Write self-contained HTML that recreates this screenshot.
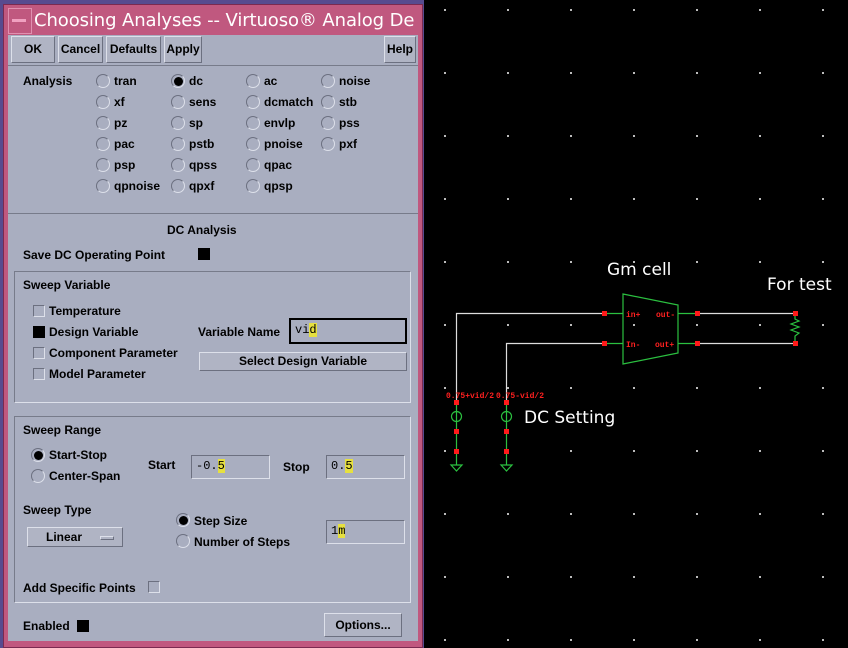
<!DOCTYPE html>
<html><head><meta charset="utf-8"><style>
*{margin:0;padding:0;box-sizing:border-box}
body{width:848px;height:648px;background:#000;position:relative;overflow:hidden;font-family:"Liberation Sans",sans-serif;font-weight:bold;font-size:12px;color:#000}
.a{position:absolute}
.t{position:absolute;white-space:nowrap;line-height:14px}
.btn{position:absolute;background:#b0b4c4;border:1px solid;border-color:#dde0ea #6c7080 #6c7080 #dde0ea;text-align:center;line-height:24px}
.rb{position:absolute;width:14px;height:14px;border-radius:50%;border:1px solid;border-color:#6c7080 #dde0ea #dde0ea #6c7080;background:#a9aec0}
.rb.on::after{content:"";position:absolute;left:2px;top:2px;width:9px;height:9px;border-radius:50%;background:#000}
.cb{position:absolute;width:12px;height:12px;border:1px solid;border-color:#6c7080 #dde0ea #dde0ea #6c7080;background:#a9aec0}
.cb.on{background:#000;border-color:#000}
.grp{position:absolute;border:1px solid;border-color:#777b8a #dde0ea #dde0ea #777b8a}
.inp{position:absolute;border:1px solid;border-color:#6c7080 #dde0ea #dde0ea #6c7080;font-family:"Liberation Mono",monospace;font-weight:normal;font-size:12px;padding:3px 4px;background:#a9aec0}
.cur{background:#e6e040}
</style></head><body>
<div class="a" style="left:0;top:0;width:424px;height:648px;background:#574b8f"></div>
<div class="a" style="left:3px;top:4px;width:420px;height:644px;background:#c0587f;border:1px solid #7a2a50"></div>
<div class="a" style="left:8px;top:8px;width:24px;height:26px;background:#c0587f;border:1px solid #e090b0"></div>
<div class="a" style="left:12px;top:19px;width:14px;height:3px;background:#f0a0c0"></div>
<div class="a" style="left:33px;top:8px;width:385px;height:27px;overflow:hidden"><div class="t" style="left:1px;top:2px;font-size:18px;line-height:22px;font-weight:normal;color:#fff;font-family:'DejaVu Sans',sans-serif;letter-spacing:-0.1px">Choosing Analyses -- Virtuoso® Analog De</div></div>
<div class="a" style="left:8px;top:35px;width:410px;height:606px;background:#a9aec0"></div>
<div class="btn" style="left:11px;top:36px;width:44px;height:27px">OK</div>
<div class="btn" style="left:58px;top:36px;width:45px;height:27px">Cancel</div>
<div class="btn" style="left:106px;top:36px;width:55px;height:27px">Defaults</div>
<div class="btn" style="left:164px;top:36px;width:38px;height:27px">Apply</div>
<div class="btn" style="left:384px;top:36px;width:32px;height:27px">Help</div>
<div class="a" style="left:8px;top:65px;width:410px;height:1px;background:#777b8a"></div>
<div class="t" style="left:23px;top:74px">Analysis</div>
<div class="rb" style="left:96px;top:74px"></div><div class="t" style="left:114px;top:74px">tran</div>
<div class="rb on" style="left:171px;top:74px"></div><div class="t" style="left:189px;top:74px">dc</div>
<div class="rb" style="left:246px;top:74px"></div><div class="t" style="left:264px;top:74px">ac</div>
<div class="rb" style="left:321px;top:74px"></div><div class="t" style="left:339px;top:74px">noise</div>
<div class="rb" style="left:96px;top:95px"></div><div class="t" style="left:114px;top:95px">xf</div>
<div class="rb" style="left:171px;top:95px"></div><div class="t" style="left:189px;top:95px">sens</div>
<div class="rb" style="left:246px;top:95px"></div><div class="t" style="left:264px;top:95px">dcmatch</div>
<div class="rb" style="left:321px;top:95px"></div><div class="t" style="left:339px;top:95px">stb</div>
<div class="rb" style="left:96px;top:116px"></div><div class="t" style="left:114px;top:116px">pz</div>
<div class="rb" style="left:171px;top:116px"></div><div class="t" style="left:189px;top:116px">sp</div>
<div class="rb" style="left:246px;top:116px"></div><div class="t" style="left:264px;top:116px">envlp</div>
<div class="rb" style="left:321px;top:116px"></div><div class="t" style="left:339px;top:116px">pss</div>
<div class="rb" style="left:96px;top:137px"></div><div class="t" style="left:114px;top:137px">pac</div>
<div class="rb" style="left:171px;top:137px"></div><div class="t" style="left:189px;top:137px">pstb</div>
<div class="rb" style="left:246px;top:137px"></div><div class="t" style="left:264px;top:137px">pnoise</div>
<div class="rb" style="left:321px;top:137px"></div><div class="t" style="left:339px;top:137px">pxf</div>
<div class="rb" style="left:96px;top:158px"></div><div class="t" style="left:114px;top:158px">psp</div>
<div class="rb" style="left:171px;top:158px"></div><div class="t" style="left:189px;top:158px">qpss</div>
<div class="rb" style="left:246px;top:158px"></div><div class="t" style="left:264px;top:158px">qpac</div>
<div class="rb" style="left:96px;top:179px"></div><div class="t" style="left:114px;top:179px">qpnoise</div>
<div class="rb" style="left:171px;top:179px"></div><div class="t" style="left:189px;top:179px">qpxf</div>
<div class="rb" style="left:246px;top:179px"></div><div class="t" style="left:264px;top:179px">qpsp</div>
<div class="a" style="left:8px;top:213px;width:410px;height:1px;background:#777b8a"></div>
<div class="t" style="left:167px;top:223px">DC Analysis</div>
<div class="t" style="left:23px;top:248px">Save DC Operating Point</div>
<div class="cb on" style="left:198px;top:248px"></div>
<div class="grp" style="left:14px;top:271px;width:397px;height:132px"></div>
<div class="t" style="left:23px;top:278px">Sweep Variable</div>
<div class="cb" style="left:33px;top:305px"></div><div class="t" style="left:49px;top:304px">Temperature</div>
<div class="cb on" style="left:33px;top:326px"></div><div class="t" style="left:49px;top:325px">Design Variable</div>
<div class="cb" style="left:33px;top:347px"></div><div class="t" style="left:49px;top:346px">Component Parameter</div>
<div class="cb" style="left:33px;top:368px"></div><div class="t" style="left:49px;top:367px">Model Parameter</div>
<div class="t" style="left:198px;top:325px">Variable Name</div>
<div class="inp" style="left:289px;top:318px;width:118px;height:26px;border:2px solid #000">vi<span class="cur">d</span></div>
<div class="btn" style="left:199px;top:352px;width:208px;height:19px;line-height:16px">Select Design Variable</div>
<div class="grp" style="left:14px;top:416px;width:397px;height:187px"></div>
<div class="t" style="left:23px;top:423px">Sweep Range</div>
<div class="rb on" style="left:31px;top:448px"></div><div class="t" style="left:49px;top:448px">Start-Stop</div>
<div class="rb" style="left:31px;top:469px"></div><div class="t" style="left:49px;top:469px">Center-Span</div>
<div class="t" style="left:148px;top:458px">Start</div>
<div class="inp" style="left:191px;top:455px;width:79px;height:24px">-0.<span class="cur">5</span></div>
<div class="t" style="left:283px;top:460px">Stop</div>
<div class="inp" style="left:326px;top:455px;width:79px;height:24px">0.<span class="cur">5</span></div>
<div class="t" style="left:23px;top:503px">Sweep Type</div>
<div class="btn" style="left:27px;top:527px;width:96px;height:20px;line-height:18px;text-align:left;padding-left:18px">Linear<span class="a" style="left:72px;top:8px;width:14px;height:4px;border:1px solid;border-color:#dde0ea #6c7080 #6c7080 #dde0ea"></span></div>
<div class="rb on" style="left:176px;top:513px"></div><div class="t" style="left:194px;top:514px">Step Size</div>
<div class="rb" style="left:176px;top:534px"></div><div class="t" style="left:194px;top:535px">Number of Steps</div>
<div class="inp" style="left:326px;top:520px;width:79px;height:24px">1<span class="cur">m</span></div>
<div class="t" style="left:23px;top:581px">Add Specific Points</div>
<div class="cb" style="left:148px;top:581px"></div>
<div class="t" style="left:23px;top:619px">Enabled</div>
<div class="cb on" style="left:77px;top:620px"></div>
<div class="btn" style="left:324px;top:613px;width:78px;height:24px;line-height:22px">Options...</div>
<svg class="a" style="left:0;top:0" width="848" height="648">
<g fill="#bbb">
<rect x="444" y="9" width="2" height="2"/><rect x="507" y="9" width="2" height="2"/><rect x="570" y="9" width="2" height="2"/><rect x="633" y="9" width="2" height="2"/><rect x="696" y="9" width="2" height="2"/><rect x="759" y="9" width="2" height="2"/><rect x="822" y="9" width="2" height="2"/>
<rect x="444" y="72" width="2" height="2"/><rect x="507" y="72" width="2" height="2"/><rect x="570" y="72" width="2" height="2"/><rect x="633" y="72" width="2" height="2"/><rect x="696" y="72" width="2" height="2"/><rect x="759" y="72" width="2" height="2"/><rect x="822" y="72" width="2" height="2"/>
<rect x="444" y="135" width="2" height="2"/><rect x="507" y="135" width="2" height="2"/><rect x="570" y="135" width="2" height="2"/><rect x="633" y="135" width="2" height="2"/><rect x="696" y="135" width="2" height="2"/><rect x="759" y="135" width="2" height="2"/><rect x="822" y="135" width="2" height="2"/>
<rect x="444" y="198" width="2" height="2"/><rect x="507" y="198" width="2" height="2"/><rect x="570" y="198" width="2" height="2"/><rect x="633" y="198" width="2" height="2"/><rect x="696" y="198" width="2" height="2"/><rect x="759" y="198" width="2" height="2"/><rect x="822" y="198" width="2" height="2"/>
<rect x="444" y="261" width="2" height="2"/><rect x="507" y="261" width="2" height="2"/><rect x="570" y="261" width="2" height="2"/><rect x="633" y="261" width="2" height="2"/><rect x="696" y="261" width="2" height="2"/><rect x="759" y="261" width="2" height="2"/><rect x="822" y="261" width="2" height="2"/>
<rect x="444" y="324" width="2" height="2"/><rect x="507" y="324" width="2" height="2"/><rect x="570" y="324" width="2" height="2"/><rect x="633" y="324" width="2" height="2"/><rect x="696" y="324" width="2" height="2"/><rect x="759" y="324" width="2" height="2"/><rect x="822" y="324" width="2" height="2"/>
<rect x="444" y="387" width="2" height="2"/><rect x="507" y="387" width="2" height="2"/><rect x="570" y="387" width="2" height="2"/><rect x="633" y="387" width="2" height="2"/><rect x="696" y="387" width="2" height="2"/><rect x="759" y="387" width="2" height="2"/><rect x="822" y="387" width="2" height="2"/>
<rect x="444" y="450" width="2" height="2"/><rect x="507" y="450" width="2" height="2"/><rect x="570" y="450" width="2" height="2"/><rect x="633" y="450" width="2" height="2"/><rect x="696" y="450" width="2" height="2"/><rect x="759" y="450" width="2" height="2"/><rect x="822" y="450" width="2" height="2"/>
<rect x="444" y="513" width="2" height="2"/><rect x="507" y="513" width="2" height="2"/><rect x="570" y="513" width="2" height="2"/><rect x="633" y="513" width="2" height="2"/><rect x="696" y="513" width="2" height="2"/><rect x="759" y="513" width="2" height="2"/><rect x="822" y="513" width="2" height="2"/>
<rect x="444" y="576" width="2" height="2"/><rect x="507" y="576" width="2" height="2"/><rect x="570" y="576" width="2" height="2"/><rect x="633" y="576" width="2" height="2"/><rect x="696" y="576" width="2" height="2"/><rect x="759" y="576" width="2" height="2"/><rect x="822" y="576" width="2" height="2"/>
<rect x="444" y="639" width="2" height="2"/><rect x="507" y="639" width="2" height="2"/><rect x="570" y="639" width="2" height="2"/><rect x="633" y="639" width="2" height="2"/><rect x="696" y="639" width="2" height="2"/><rect x="759" y="639" width="2" height="2"/><rect x="822" y="639" width="2" height="2"/>
</g>
<g stroke="#ddd" fill="none" stroke-width="1.2">
<polyline points="456.5,402 456.5,313.5 604,313.5"/>
<polyline points="506.5,402 506.5,343.5 604,343.5"/>
<line x1="697" y1="313.5" x2="795" y2="313.5"/><line x1="697" y1="343.5" x2="795" y2="343.5"/>
</g>
<g stroke="#2bc040" fill="none" stroke-width="1.2">
<polygon points="623,294 678,305 678,353 623,364"/>
<line x1="604" y1="313.5" x2="623" y2="313.5"/><line x1="604" y1="343.5" x2="623" y2="343.5"/>
<line x1="678" y1="313.5" x2="697" y2="313.5"/><line x1="678" y1="343.5" x2="697" y2="343.5"/>
<polyline points="795,313 795,319 799,321 791,324 799,327 791,330 799,333 795,336 795,343"/>
<line x1="456.5" y1="402" x2="456.5" y2="465"/><line x1="506.5" y1="402" x2="506.5" y2="465"/>
<circle cx="456.5" cy="416.5" r="5"/><circle cx="506.5" cy="416.5" r="5"/>
<polygon points="451,465 462,465 456.5,471"/><polygon points="501,465 512,465 506.5,471"/>
</g>
<g fill="#ff1a1a">
<rect x="602" y="311" width="5" height="5"/><rect x="602" y="341" width="5" height="5"/>
<rect x="695" y="311" width="5" height="5"/><rect x="695" y="341" width="5" height="5"/>
<rect x="793" y="311" width="5" height="5"/><rect x="793" y="341" width="5" height="5"/>
<rect x="454" y="400" width="5" height="5"/><rect x="454" y="429" width="5" height="5"/><rect x="454" y="449" width="5" height="5"/>
<rect x="504" y="400" width="5" height="5"/><rect x="504" y="429" width="5" height="5"/><rect x="504" y="449" width="5" height="5"/>
</g>
<g fill="#ff2020" font-family="Liberation Mono,monospace" font-size="8">
<text x="626" y="317">in+</text><text x="626" y="347">In-</text>
<text x="656" y="317">out-</text><text x="655" y="347">out+</text>
<text x="446" y="398">0.75+vid/2</text><text x="496" y="398">0.75-vid/2</text>
</g>
<g fill="#fff" font-family="DejaVu Sans,sans-serif" font-size="17" font-weight="normal">
<text x="607" y="275">Gm cell</text><text x="767" y="290">For test</text><text x="524" y="423">DC Setting</text>
</g>
</svg>
</body></html>
